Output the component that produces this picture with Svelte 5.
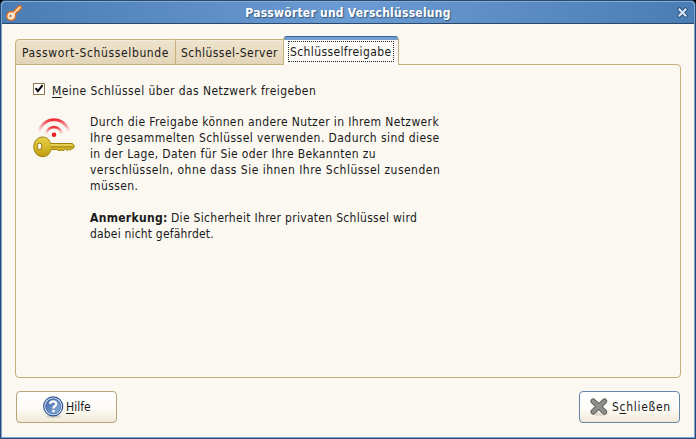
<script>
  const lines = [
    { t: 'Durch die Freigabe können andere Nutzer in Ihrem Netzwerk', s: 0.38 },
    { t: 'Ihre gesammelten Schlüssel verwenden. Dadurch sind diese', s: 0.42 },
    { t: 'in der Lage, Daten für Sie oder Ihre Bekannten zu', s: 0.36 },
    { t: 'verschlüsseln, ohne dass Sie ihnen Ihre Schlüssel zusenden', s: 0.48 },
    { t: 'müssen.', s: 0.4 }
  ];
</script>

<div class="frame">
  <div class="window">
    <header class="titlebar">
      <svg class="appicon" width="18" height="18" viewBox="0 0 18 18">
        <path d="M8 8 L13.6 2.2 L16.2 2 L16.4 4.6 L14.6 5.2 L14.4 7 L12.6 7.2 L10.4 10 C11.4 13.2 9.6 16.3 6.2 16.3 C3 16.3 1.5 14 1.7 11.6 C2 8.4 5.2 6.8 8 8 Z" fill="#ffe9cf" stroke="#df6c1b" stroke-width="1.3" stroke-linejoin="round" />
        <circle cx="5.4" cy="12" r="1.2" fill="#6b94c5" stroke="#e0a268" stroke-width=".8" />
        <path d="M8.9 9.5 L14.4 4" stroke="#f6cda3" stroke-width=".8" />
      </svg>
      <h1>Passwörter und Verschlüsselung</h1>
      <svg class="close" width="11" height="11" viewBox="0 0 11 11">
        <path d="M2.5 2.5 L8.5 8.5 M8.5 2.5 L2.5 8.5" stroke="#2d527d" stroke-width="4" stroke-linecap="square" />
        <path d="M2.5 2.5 L8.5 8.5 M8.5 2.5 L2.5 8.5" stroke="#d6e5f5" stroke-width="2.2" stroke-linecap="square" />
      </svg>
    </header>
    <main>
      <nav class="tabs">
        <div class="tab first"><span class="a">Passwort-Schüsselbunde</span></div>
        <div class="tab"><span class="b">Schlüssel-Server</span></div>
        <div class="tab active"><span class="focus"><span class="c">Schlüsselfreigabe</span></span></div>
      </nav>
      <section class="panel">
        <div class="check">
          <svg width="12" height="12" viewBox="0 0 12 12">
            <rect x=".5" y=".5" width="11" height="11" fill="#fff" stroke="#8c7a4b" />
            <path d="M2.6 5.2 L4.9 8.2 L9.6 2.2" fill="none" stroke="#000" stroke-width="2" />
          </svg>
          <span class="d"><u>M</u>eine Schlüssel über das Netzwerk freigeben</span>
        </div>
        <div class="info">
          <svg class="key" width="44" height="46" viewBox="0 0 44 46">
            <defs>
              <linearGradient id="gold" x1="0" y1="0" x2="0" y2="1">
                <stop offset="0" stop-color="#e6d04a" />
                <stop offset=".5" stop-color="#d6bb2c" />
                <stop offset="1" stop-color="#c09a10" />
              </linearGradient>
              <linearGradient id="wave" x1="0" y1="0" x2="0" y2="1">
                <stop offset="0" stop-color="#ef2f3a" />
                <stop offset=".45" stop-color="#f3757b" stop-opacity=".7" />
                <stop offset="1" stop-color="#f79da1" stop-opacity="0" />
              </linearGradient>
            </defs>
            <path d="M6.2 19.4 A15 15 0 0 1 35.8 19.4" fill="none" stroke="url(#wave)" stroke-width="3" />
            <path d="M13.3 21.8 A7.7 7.7 0 0 1 28.7 21.8" fill="none" stroke="url(#wave)" stroke-width="2.6" />
            <circle cx="21" cy="21.8" r="2.3" fill="#ed1c24" />
            <path d="M17.6 30.5 H39.5 L41.5 33 L39.8 35.8 H38.2 L37.2 37.3 L35.6 36 L34.2 37.6 L32.4 36 L30.5 37.6 L28 37 L25.8 37.7 L24 36.5 H18 C16.9 41 14 43.7 9.8 43.7 C4.6 43.7 .8 39.5 .8 33.9 C.8 28.2 4.6 24 9.8 24 C13.8 24 16.5 26.7 17.6 30.5 Z" fill="url(#gold)" stroke="#a1800f" />
            <path d="M17.5 33.9 H39.5" stroke="#a08016" stroke-width="1" />
            <path d="M17.5 32 H38.8" stroke="#efe07a" stroke-width=".9" />
            <rect x="4.4" y="30.2" width="4.3" height="6.2" rx="2" fill="#fcf9f1" stroke="#977a12" />
          </svg>
          <div class="text">
            {#each lines as l}
              <p style="letter-spacing:{l.s}px">{l.t}</p>
            {/each}
            <p class="note"><b>Anmerkung:</b> <span class="e">Die Sicherheit Ihrer privaten Schlüssel wird</span></p>
            <p class="f">dabei nicht gefährdet.</p>
          </div>
        </div>
      </section>
      <footer>
        <button class="help">
          <svg width="22" height="22" viewBox="0 0 22 22">
            <defs>
              <linearGradient id="blue" x1="0" y1="0" x2="1" y2="1">
                <stop offset="0" stop-color="#3d66a5" />
                <stop offset="1" stop-color="#8fb2df" />
              </linearGradient>
            </defs>
            <ellipse cx="10.5" cy="20.3" rx="8" ry="1.6" fill="#d8d2c4" />
            <circle cx="10.2" cy="10.4" r="9.5" fill="#e9f0fa" stroke="#2c5596" stroke-width="1.2" />
            <circle cx="10.2" cy="10.4" r="7.6" fill="url(#blue)" stroke="#3a63a3" stroke-width=".8" />
            <path d="M7.1 8 C7.2 4.6 13.3 4.6 13.3 7.9 C13.3 10 10.4 10 10.4 12.4" fill="none" stroke="#fff" stroke-width="2.3" />
            <circle cx="10.4" cy="15.1" r="1.4" fill="#fff" />
          </svg>
          <span class="g"><u>H</u>ilfe</span>
        </button>
        <button class="shut">
          <svg width="20" height="20" viewBox="0 0 20 20">
            <ellipse cx="11" cy="17" rx="8" ry="1.8" fill="#ddd8cc" />
            <path d="M4.2 4.2 L15.4 14.8 M15.4 4.2 L4.2 14.8" stroke="#5c5e5a" stroke-width="5.4" stroke-linecap="round" />
            <path d="M4.2 4.2 L15.4 14.8 M15.4 4.2 L4.2 14.8" stroke="#8f908c" stroke-width="3.5" stroke-linecap="round" />
          </svg>
          <span class="h">S<u>c</u>hließen</span>
        </button>
      </footer>
    </main>
  </div>
</div>

<style>
  :global(body) { background: #000; overflow: hidden; }
  .frame { box-sizing: border-box; width: 696px; height: 439px; background: #2b496c; border-radius: 5px 5px 0 0; padding: 1px; font: 12px/16px "DejaVu Sans Condensed", "DejaVu Sans", sans-serif; font-stretch: condensed; color: #1a1a1a; }
  .window { box-sizing: border-box; height: 437px; border: 1px solid #77a4d6; border-top-color: #82abda; border-radius: 4px 4px 0 0; display: flex; flex-direction: column; overflow: hidden; background: #fbf8f1; }
  .titlebar { box-sizing: border-box; height: 22px; flex: none; display: flex; align-items: center; justify-content: space-between; background: linear-gradient(90deg, #4b7db5, #6a9bd2 50%, #4b7db5); border-bottom: 1px solid #2b496c; padding: 0 6px 0 3px; }
  h1 { margin: 1px 0 0 -4px; font: bold 12px/16px "DejaVu Sans Condensed", "DejaVu Sans", sans-serif; font-stretch: condensed; letter-spacing: .24px; color: #fff; text-shadow: 1px 1px 1px #34567e; white-space: nowrap; }
  main { flex: 1; padding: 12px 13px 13px; display: flex; flex-direction: column; }
  .tabs { display: flex; align-items: flex-end; height: 29px; flex: none; position: relative; z-index: 1; margin-bottom: -1px; }
  .tab { box-sizing: border-box; height: 26px; border: 1px solid #c6af7b; border-left: 0; background: linear-gradient(#eee3cc, #e3d5b8); padding: 5px 0 0 5px; width: 108px; white-space: nowrap; box-shadow: inset 0 1px #f4ecda; }
  .first { width: 161px; border-left: 1px solid #c6af7b; border-radius: 4px 0 0; padding-left: 6px; }
  .active { width: 116px; height: 29px; margin-left: -1px; border: 1px solid #c6af7b; border-top: 1px solid #3b669a; border-bottom: 0; border-radius: 4px 4px 0 0; background: linear-gradient(#729fd0 0 3px, #fdfbf7 3px); padding: 4px 4px 0; box-shadow: none; }
  .focus { display: block; box-sizing: border-box; height: 21px; width: 106px; border: 1px dotted #222; padding: 2px 0 0 1px; }
  .a { letter-spacing: .63px; }
  .b { letter-spacing: .45px; }
  .c { letter-spacing: .38px; }
  .d { letter-spacing: .42px; }
  .e { letter-spacing: .3px; }
  .f { letter-spacing: .18px; }
  .h { letter-spacing: .7px; }
  b { letter-spacing: .3px; }
  .panel { flex: none; box-sizing: border-box; height: 314px; border: 1px solid #c6af7b; border-radius: 0 4px 4px 4px; padding: 18px 17px; }
  .check { display: flex; gap: 7px; }
  .check svg { flex: none; }
  u { text-decoration-thickness: 1px; text-underline-offset: 2px; }
  .info { display: flex; margin-top: 15px; gap: 13px; }
  .key { flex: none; margin-top: -1px; }
  .text { white-space: nowrap; }
  p { margin: 0; }
  .note { margin-top: 16px; }
  footer { display: flex; justify-content: space-between; margin-top: 13px; padding: 0 1px; }
  button { box-sizing: border-box; width: 101px; height: 32px; display: flex; align-items: center; padding: 0; font: inherit; color: inherit; border: 1px solid #b7a47a; border-radius: 4px; background: linear-gradient(#fff, #fdfbf6 55%, #f1ead8); }
  .help { padding-left: 26px; gap: 1px; }
  .shut { border-color: #6484a8; padding-left: 9px; gap: 3px; }
</style>
